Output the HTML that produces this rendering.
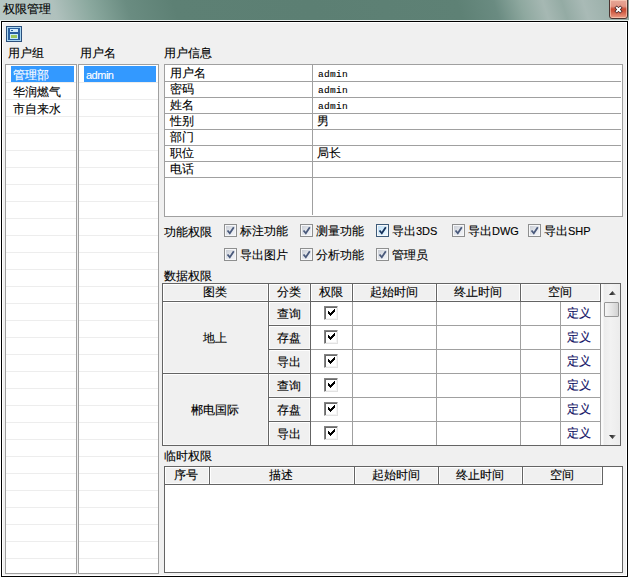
<!DOCTYPE html>
<html><head><meta charset="utf-8">
<style>
*{margin:0;padding:0;box-sizing:border-box}
html,body{width:629px;height:578px;overflow:hidden;background:#fff}
body{position:relative;font-family:"Liberation Sans",sans-serif;font-size:12px;color:#000;line-height:1}
.a{position:absolute}
.t{position:absolute;white-space:nowrap;line-height:12px;font-size:12px;-webkit-text-stroke:0.12px currentColor}
#title{left:0;top:0;width:629px;height:20px;
 background:linear-gradient(72deg,#b8c8c4 0px,#b0c1bd 55px,#8aa89e 90px,#6a8c81 125px,#5d8074 170px,#5c7f73 300px,#5e8175 440px,#6a8b81 475px,#8ea89f 500px,#a6b8b3 522px,#94aba4 540px,#a9bab6 560px,#9bb0aa 585px,#8fa6a0 605px,#a0b3ae 629px)}
#titleline{left:0;top:20px;width:629px;height:1px;background:#e8eeec}
#close{left:609px;top:-1px;width:19px;height:20px;border:1px solid #4a3430;border-radius:0 0 3px 3px;box-shadow:inset 0 0 0 1px rgba(255,220,200,.55);
 background:linear-gradient(180deg,#e8a898 0%,#e29684 35%,#c84a32 50%,#cf5c44 65%,#e48a72 90%,#eaa088 100%)}
#win{left:1px;top:21px;width:627px;height:556px;border:1px solid #000;background:#f0f0f0;box-shadow:inset 1px 1px 0 #fff,inset -1px -1px 0 #fff}
.list{position:absolute;top:64px;height:510px;border:1px solid #a0a0a0;background:#fff;
 background-image:repeating-linear-gradient(180deg,transparent 0px,transparent 16px,#ededed 16px,#ededed 17px);background-position:0 1px}
.sel{position:absolute;background:#3399ff;height:16px;top:66px}
.grid{position:absolute;border:1px solid #a0a0a0;background:#fff}
.hl{position:absolute;height:1px;background:#a0a0a0}
.vl{position:absolute;width:1px;background:#a0a0a0}
.mono{font-family:"Liberation Mono",monospace;font-size:9.5px;letter-spacing:0.3px}
.cb{position:absolute;width:13px;height:13px;border:1px solid #8e8f8f;
 background:linear-gradient(135deg,#c4c8d0 0%,#e6e9ee 55%,#f4f5f8 100%);box-shadow:inset 0 0 0 1px #f6f7f9}
.cb svg{position:absolute;left:0;top:0}
.hdr{position:absolute;background:#f0f0f0;border-right:1px solid #646464;border-bottom:1px solid #646464;box-shadow:inset 1px 1px 0 #fff,inset -1px -1px 0 #fcfcfc;text-align:center}
.gc{position:absolute;background:#f0f0f0;border-right:1px solid #646464;border-bottom:1px solid #646464;box-shadow:inset 1px 1px 0 #fff,inset -1px -1px 0 #f8f8f8;text-align:center}
.wc{position:absolute;background:#fff;border-right:1px solid #a0a0a0;border-bottom:1px solid #a0a0a0}
.ccb{position:absolute;width:14px;height:14px;background:#fff;border-top:1px solid #848484;border-left:1px solid #848484;border-right:1px solid #e2e2e2;border-bottom:1px solid #e2e2e2;box-shadow:inset 1px 1px 0 #6a6a6a,inset -1px -1px 0 #f4f4f4}
.def{color:#101064}
</style></head><body>
<div id="title" class="a"></div>
<div id="titleline" class="a"></div>
<div class="t" style="left:3px;top:3px">权限管理</div>
<div id="close" class="a">
 <svg width="19" height="20" style="position:absolute;left:-1px;top:-1px">
  <path d="M6.6 7.6 L12.4 13.4 M12.4 7.6 L6.6 13.4" stroke="#4a2a2a" stroke-width="3.4" stroke-linecap="butt"/>
  <path d="M7.2 8.2 L11.8 12.8 M11.8 8.2 L7.2 12.8" stroke="#fff" stroke-width="1.9" stroke-linecap="butt"/>
 </svg>
</div>
<div id="win" class="a"></div>

<!-- save icon -->
<svg class="a" style="left:6px;top:26px" width="16" height="16" viewBox="0 0 16 16" shape-rendering="crispEdges">
 <rect x="0" y="0" width="16" height="16" fill="#2b4f7c"/>
 <rect x="1" y="1" width="14" height="14" fill="#a9d6f2"/>
 <path d="M2 2 H13 L14 3 V14 H2 Z" fill="#2a5f9e"/>
 <rect x="4" y="3" width="8" height="3" fill="#d4ecfb"/>
 <rect x="5" y="4" width="2" height="1" fill="#2a5f9e"/>
 <rect x="4" y="8" width="8" height="5" fill="#c6ecfa"/>
 <rect x="5" y="9" width="6" height="3" fill="#9cc65a"/>
</svg>

<div class="t" style="left:8px;top:47px">用户组</div>
<div class="t" style="left:80px;top:47px">用户名</div>
<div class="t" style="left:164px;top:47px">用户信息</div>

<div class="list" style="left:5px;width:72px"></div>
<div class="list" style="left:78px;width:81px"></div>
<div class="sel" style="left:11px;width:63px"></div>
<div class="t" style="left:13px;top:69px;color:#fff">管理部</div>
<div class="t" style="left:13px;top:86px">华润燃气</div>
<div class="t" style="left:13px;top:103px">市自来水</div>
<div class="sel" style="left:84px;width:72px"></div>
<div class="t" style="left:86px;top:69px;color:#fff;font-size:11px;letter-spacing:-0.5px">admin</div>

<!-- user info -->
<div class="grid" style="left:164px;top:64px;width:459px;height:153px"></div>
<div class="vl" style="left:312px;top:65px;height:150px"></div>
<div class="hl" style="left:165px;top:81px;width:456px"></div>
<div class="hl" style="left:165px;top:97px;width:456px"></div>
<div class="hl" style="left:165px;top:113px;width:456px"></div>
<div class="hl" style="left:165px;top:129px;width:456px"></div>
<div class="hl" style="left:165px;top:145px;width:456px"></div>
<div class="hl" style="left:165px;top:161px;width:456px"></div>
<div class="hl" style="left:165px;top:177px;width:456px"></div>
<div class="t" style="left:170px;top:67px">用户名</div>
<div class="t" style="left:170px;top:83px">密码</div>
<div class="t" style="left:170px;top:99px">姓名</div>
<div class="t" style="left:170px;top:115px">性别</div>
<div class="t" style="left:170px;top:131px">部门</div>
<div class="t" style="left:170px;top:147px">职位</div>
<div class="t" style="left:170px;top:163px">电话</div>
<div class="t mono" style="left:318px;top:69px">admin</div>
<div class="t mono" style="left:318px;top:85px">admin</div>
<div class="t mono" style="left:318px;top:101px">admin</div>
<div class="t" style="left:317px;top:115px">男</div>
<div class="t" style="left:317px;top:147px">局长</div>

<!-- function permissions -->
<div class="t" style="left:164px;top:226px">功能权限</div>
<div class="cb" style="left:224px;top:224px"><svg width="11" height="11"><path d="M2.5 5.5 L4.8 8.3 L8.8 2.2" fill="none" stroke="#4a5a7c" stroke-width="1.8"/></svg></div>
<div class="t" style="left:240px;top:225px">标注功能</div>
<div class="cb" style="left:300px;top:224px"><svg width="11" height="11"><path d="M2.5 5.5 L4.8 8.3 L8.8 2.2" fill="none" stroke="#4a5a7c" stroke-width="1.8"/></svg></div>
<div class="t" style="left:316px;top:225px">测量功能</div>
<div class="cb" style="left:376px;top:224px;border-color:#3d5a78;background:linear-gradient(135deg,#bcdcf4 0%,#dcf0fc 60%,#eef8ff 100%)"><svg width="11" height="11"><path d="M2.5 5.5 L4.8 8.3 L8.8 2.2" fill="none" stroke="#15305a" stroke-width="1.8"/></svg></div>
<div class="t" style="left:392px;top:225px">导出<span style="font-size:11px">3DS</span></div>
<div class="cb" style="left:452px;top:224px"><svg width="11" height="11"><path d="M2.5 5.5 L4.8 8.3 L8.8 2.2" fill="none" stroke="#4a5a7c" stroke-width="1.8"/></svg></div>
<div class="t" style="left:468px;top:225px">导出<span style="font-size:11px">DWG</span></div>
<div class="cb" style="left:528px;top:224px"><svg width="11" height="11"><path d="M2.5 5.5 L4.8 8.3 L8.8 2.2" fill="none" stroke="#4a5a7c" stroke-width="1.8"/></svg></div>
<div class="t" style="left:544px;top:225px">导出<span style="font-size:11px">SHP</span></div>
<div class="cb" style="left:224px;top:248px"><svg width="11" height="11"><path d="M2.5 5.5 L4.8 8.3 L8.8 2.2" fill="none" stroke="#4a5a7c" stroke-width="1.8"/></svg></div>
<div class="t" style="left:240px;top:249px">导出图片</div>
<div class="cb" style="left:300px;top:248px"><svg width="11" height="11"><path d="M2.5 5.5 L4.8 8.3 L8.8 2.2" fill="none" stroke="#4a5a7c" stroke-width="1.8"/></svg></div>
<div class="t" style="left:316px;top:249px">分析功能</div>
<div class="cb" style="left:376px;top:248px"><svg width="11" height="11"><path d="M2.5 5.5 L4.8 8.3 L8.8 2.2" fill="none" stroke="#4a5a7c" stroke-width="1.8"/></svg></div>
<div class="t" style="left:392px;top:249px">管理员</div>
<div class="t" style="left:164px;top:270px">数据权限</div>
<div class="grid" style="left:162px;top:283px;width:459px;height:163px;border-color:#646464"></div>
<div class="hdr" style="left:163px;top:284px;width:106px;height:18px"><span class="t" style="position:relative;left:-1px;display:block;padding-top:2px">图类</span></div>
<div class="hdr" style="left:269px;top:284px;width:42px;height:18px"><span class="t" style="position:relative;left:-1px;display:block;padding-top:2px">分类</span></div>
<div class="hdr" style="left:311px;top:284px;width:42px;height:18px"><span class="t" style="position:relative;left:-1px;display:block;padding-top:2px">权限</span></div>
<div class="hdr" style="left:353px;top:284px;width:84px;height:18px"><span class="t" style="position:relative;left:-1px;display:block;padding-top:2px">起始时间</span></div>
<div class="hdr" style="left:437px;top:284px;width:84px;height:18px"><span class="t" style="position:relative;left:-1px;display:block;padding-top:2px">终止时间</span></div>
<div class="hdr" style="left:521px;top:284px;width:80px;height:18px"><span class="t" style="position:relative;left:-1px;display:block;padding-top:2px">空间</span></div>
<div class="gc" style="left:163px;top:302px;width:106px;height:72px"><span class="t" style="position:relative;left:-1px;display:block;padding-top:30px">地上</span></div>
<div class="gc" style="left:163px;top:374px;width:106px;height:72px"><span class="t" style="position:relative;left:-1px;display:block;padding-top:30px">郴电国际</span></div>
<div class="gc" style="left:269px;top:302px;width:42px;height:24px"><span class="t" style="position:relative;left:-1px;display:block;padding-top:6px">查询</span></div>
<div class="wc" style="left:311px;top:302px;width:42px;height:24px"></div>
<div class="ccb" style="left:324px;top:306px"><svg width="7" height="7" style="position:absolute;left:3px;top:2px" shape-rendering="crispEdges"><rect x="6" y="0" width="1" height="1"/><rect x="5" y="1" width="1" height="1"/><rect x="6" y="1" width="1" height="1"/><rect x="0" y="2" width="1" height="1"/><rect x="4" y="2" width="1" height="1"/><rect x="5" y="2" width="1" height="1"/><rect x="6" y="2" width="1" height="1"/><rect x="0" y="3" width="1" height="1"/><rect x="1" y="3" width="1" height="1"/><rect x="3" y="3" width="1" height="1"/><rect x="4" y="3" width="1" height="1"/><rect x="5" y="3" width="1" height="1"/><rect x="0" y="4" width="1" height="1"/><rect x="1" y="4" width="1" height="1"/><rect x="2" y="4" width="1" height="1"/><rect x="3" y="4" width="1" height="1"/><rect x="4" y="4" width="1" height="1"/><rect x="1" y="5" width="1" height="1"/><rect x="2" y="5" width="1" height="1"/><rect x="3" y="5" width="1" height="1"/><rect x="2" y="6" width="1" height="1"/></svg></div>
<div class="wc" style="left:353px;top:302px;width:84px;height:24px"></div>
<div class="wc" style="left:437px;top:302px;width:84px;height:24px"></div>
<div class="wc" style="left:521px;top:302px;width:40px;height:24px"></div>
<div class="wc" style="left:561px;top:302px;width:40px;height:24px"></div>
<div class="t def" style="left:567px;top:307px">定义</div>
<div class="gc" style="left:269px;top:326px;width:42px;height:24px"><span class="t" style="position:relative;left:-1px;display:block;padding-top:6px">存盘</span></div>
<div class="wc" style="left:311px;top:326px;width:42px;height:24px"></div>
<div class="ccb" style="left:324px;top:330px"><svg width="7" height="7" style="position:absolute;left:3px;top:2px" shape-rendering="crispEdges"><rect x="6" y="0" width="1" height="1"/><rect x="5" y="1" width="1" height="1"/><rect x="6" y="1" width="1" height="1"/><rect x="0" y="2" width="1" height="1"/><rect x="4" y="2" width="1" height="1"/><rect x="5" y="2" width="1" height="1"/><rect x="6" y="2" width="1" height="1"/><rect x="0" y="3" width="1" height="1"/><rect x="1" y="3" width="1" height="1"/><rect x="3" y="3" width="1" height="1"/><rect x="4" y="3" width="1" height="1"/><rect x="5" y="3" width="1" height="1"/><rect x="0" y="4" width="1" height="1"/><rect x="1" y="4" width="1" height="1"/><rect x="2" y="4" width="1" height="1"/><rect x="3" y="4" width="1" height="1"/><rect x="4" y="4" width="1" height="1"/><rect x="1" y="5" width="1" height="1"/><rect x="2" y="5" width="1" height="1"/><rect x="3" y="5" width="1" height="1"/><rect x="2" y="6" width="1" height="1"/></svg></div>
<div class="wc" style="left:353px;top:326px;width:84px;height:24px"></div>
<div class="wc" style="left:437px;top:326px;width:84px;height:24px"></div>
<div class="wc" style="left:521px;top:326px;width:40px;height:24px"></div>
<div class="wc" style="left:561px;top:326px;width:40px;height:24px"></div>
<div class="t def" style="left:567px;top:331px">定义</div>
<div class="gc" style="left:269px;top:350px;width:42px;height:24px"><span class="t" style="position:relative;left:-1px;display:block;padding-top:6px">导出</span></div>
<div class="wc" style="left:311px;top:350px;width:42px;height:24px"></div>
<div class="ccb" style="left:324px;top:354px"><svg width="7" height="7" style="position:absolute;left:3px;top:2px" shape-rendering="crispEdges"><rect x="6" y="0" width="1" height="1"/><rect x="5" y="1" width="1" height="1"/><rect x="6" y="1" width="1" height="1"/><rect x="0" y="2" width="1" height="1"/><rect x="4" y="2" width="1" height="1"/><rect x="5" y="2" width="1" height="1"/><rect x="6" y="2" width="1" height="1"/><rect x="0" y="3" width="1" height="1"/><rect x="1" y="3" width="1" height="1"/><rect x="3" y="3" width="1" height="1"/><rect x="4" y="3" width="1" height="1"/><rect x="5" y="3" width="1" height="1"/><rect x="0" y="4" width="1" height="1"/><rect x="1" y="4" width="1" height="1"/><rect x="2" y="4" width="1" height="1"/><rect x="3" y="4" width="1" height="1"/><rect x="4" y="4" width="1" height="1"/><rect x="1" y="5" width="1" height="1"/><rect x="2" y="5" width="1" height="1"/><rect x="3" y="5" width="1" height="1"/><rect x="2" y="6" width="1" height="1"/></svg></div>
<div class="wc" style="left:353px;top:350px;width:84px;height:24px"></div>
<div class="wc" style="left:437px;top:350px;width:84px;height:24px"></div>
<div class="wc" style="left:521px;top:350px;width:40px;height:24px"></div>
<div class="wc" style="left:561px;top:350px;width:40px;height:24px"></div>
<div class="t def" style="left:567px;top:355px">定义</div>
<div class="gc" style="left:269px;top:374px;width:42px;height:24px"><span class="t" style="position:relative;left:-1px;display:block;padding-top:6px">查询</span></div>
<div class="wc" style="left:311px;top:374px;width:42px;height:24px"></div>
<div class="ccb" style="left:324px;top:378px"><svg width="7" height="7" style="position:absolute;left:3px;top:2px" shape-rendering="crispEdges"><rect x="6" y="0" width="1" height="1"/><rect x="5" y="1" width="1" height="1"/><rect x="6" y="1" width="1" height="1"/><rect x="0" y="2" width="1" height="1"/><rect x="4" y="2" width="1" height="1"/><rect x="5" y="2" width="1" height="1"/><rect x="6" y="2" width="1" height="1"/><rect x="0" y="3" width="1" height="1"/><rect x="1" y="3" width="1" height="1"/><rect x="3" y="3" width="1" height="1"/><rect x="4" y="3" width="1" height="1"/><rect x="5" y="3" width="1" height="1"/><rect x="0" y="4" width="1" height="1"/><rect x="1" y="4" width="1" height="1"/><rect x="2" y="4" width="1" height="1"/><rect x="3" y="4" width="1" height="1"/><rect x="4" y="4" width="1" height="1"/><rect x="1" y="5" width="1" height="1"/><rect x="2" y="5" width="1" height="1"/><rect x="3" y="5" width="1" height="1"/><rect x="2" y="6" width="1" height="1"/></svg></div>
<div class="wc" style="left:353px;top:374px;width:84px;height:24px"></div>
<div class="wc" style="left:437px;top:374px;width:84px;height:24px"></div>
<div class="wc" style="left:521px;top:374px;width:40px;height:24px"></div>
<div class="wc" style="left:561px;top:374px;width:40px;height:24px"></div>
<div class="t def" style="left:567px;top:379px">定义</div>
<div class="gc" style="left:269px;top:398px;width:42px;height:24px"><span class="t" style="position:relative;left:-1px;display:block;padding-top:6px">存盘</span></div>
<div class="wc" style="left:311px;top:398px;width:42px;height:24px"></div>
<div class="ccb" style="left:324px;top:402px"><svg width="7" height="7" style="position:absolute;left:3px;top:2px" shape-rendering="crispEdges"><rect x="6" y="0" width="1" height="1"/><rect x="5" y="1" width="1" height="1"/><rect x="6" y="1" width="1" height="1"/><rect x="0" y="2" width="1" height="1"/><rect x="4" y="2" width="1" height="1"/><rect x="5" y="2" width="1" height="1"/><rect x="6" y="2" width="1" height="1"/><rect x="0" y="3" width="1" height="1"/><rect x="1" y="3" width="1" height="1"/><rect x="3" y="3" width="1" height="1"/><rect x="4" y="3" width="1" height="1"/><rect x="5" y="3" width="1" height="1"/><rect x="0" y="4" width="1" height="1"/><rect x="1" y="4" width="1" height="1"/><rect x="2" y="4" width="1" height="1"/><rect x="3" y="4" width="1" height="1"/><rect x="4" y="4" width="1" height="1"/><rect x="1" y="5" width="1" height="1"/><rect x="2" y="5" width="1" height="1"/><rect x="3" y="5" width="1" height="1"/><rect x="2" y="6" width="1" height="1"/></svg></div>
<div class="wc" style="left:353px;top:398px;width:84px;height:24px"></div>
<div class="wc" style="left:437px;top:398px;width:84px;height:24px"></div>
<div class="wc" style="left:521px;top:398px;width:40px;height:24px"></div>
<div class="wc" style="left:561px;top:398px;width:40px;height:24px"></div>
<div class="t def" style="left:567px;top:403px">定义</div>
<div class="gc" style="left:269px;top:422px;width:42px;height:24px"><span class="t" style="position:relative;left:-1px;display:block;padding-top:6px">导出</span></div>
<div class="wc" style="left:311px;top:422px;width:42px;height:24px"></div>
<div class="ccb" style="left:324px;top:426px"><svg width="7" height="7" style="position:absolute;left:3px;top:2px" shape-rendering="crispEdges"><rect x="6" y="0" width="1" height="1"/><rect x="5" y="1" width="1" height="1"/><rect x="6" y="1" width="1" height="1"/><rect x="0" y="2" width="1" height="1"/><rect x="4" y="2" width="1" height="1"/><rect x="5" y="2" width="1" height="1"/><rect x="6" y="2" width="1" height="1"/><rect x="0" y="3" width="1" height="1"/><rect x="1" y="3" width="1" height="1"/><rect x="3" y="3" width="1" height="1"/><rect x="4" y="3" width="1" height="1"/><rect x="5" y="3" width="1" height="1"/><rect x="0" y="4" width="1" height="1"/><rect x="1" y="4" width="1" height="1"/><rect x="2" y="4" width="1" height="1"/><rect x="3" y="4" width="1" height="1"/><rect x="4" y="4" width="1" height="1"/><rect x="1" y="5" width="1" height="1"/><rect x="2" y="5" width="1" height="1"/><rect x="3" y="5" width="1" height="1"/><rect x="2" y="6" width="1" height="1"/></svg></div>
<div class="wc" style="left:353px;top:422px;width:84px;height:24px"></div>
<div class="wc" style="left:437px;top:422px;width:84px;height:24px"></div>
<div class="wc" style="left:521px;top:422px;width:40px;height:24px"></div>
<div class="wc" style="left:561px;top:422px;width:40px;height:24px"></div>
<div class="t def" style="left:567px;top:427px">定义</div>
<div class="a" style="left:601px;top:284px;width:19px;height:161px;background:linear-gradient(90deg,#fafafa 0,#fafafa 2px,#ececec 3px,#f2f2f2 50%,#ececec 100%)"></div>
<svg class="a" style="left:609px;top:291px" width="7" height="4"><defs><linearGradient id="ag" x1="0" x2="1"><stop offset="0" stop-color="#202020"/><stop offset="0.5" stop-color="#404040"/><stop offset="1" stop-color="#9a9a9a"/></linearGradient></defs><path d="M0 4 L3.5 0 L7 4 Z" fill="url(#ag)"/></svg>
<div class="a" style="left:604px;top:302px;width:15px;height:15px;border:1px solid #979797;border-radius:1px;background:linear-gradient(90deg,#f6f6f6,#e4e4e4 55%,#d2d2d2)"></div>
<svg class="a" style="left:609px;top:435px" width="7" height="4"><path d="M0 0 L3.5 4 L7 0 Z" fill="url(#ag)"/></svg>
<div class="a" style="left:162px;top:445px;width:459px;height:1px;background:#646464"></div>
<div class="t" style="left:164px;top:450px">临时权限</div>
<div class="grid" style="left:164px;top:466px;width:459px;height:107px;border-color:#646464"></div>
<div class="hdr" style="left:165px;top:467px;width:45px;height:18px"><span class="t" style="position:relative;left:-1px;display:block;padding-top:2px">序号</span></div>
<div class="hdr" style="left:210px;top:467px;width:145px;height:18px"><span class="t" style="position:relative;left:-1px;display:block;padding-top:2px">描述</span></div>
<div class="hdr" style="left:355px;top:467px;width:84px;height:18px"><span class="t" style="position:relative;left:-1px;display:block;padding-top:2px">起始时间</span></div>
<div class="hdr" style="left:439px;top:467px;width:84px;height:18px"><span class="t" style="position:relative;left:-1px;display:block;padding-top:2px">终止时间</span></div>
<div class="hdr" style="left:523px;top:467px;width:80px;height:18px"><span class="t" style="position:relative;left:-1px;display:block;padding-top:2px">空间</span></div>
</body></html>
